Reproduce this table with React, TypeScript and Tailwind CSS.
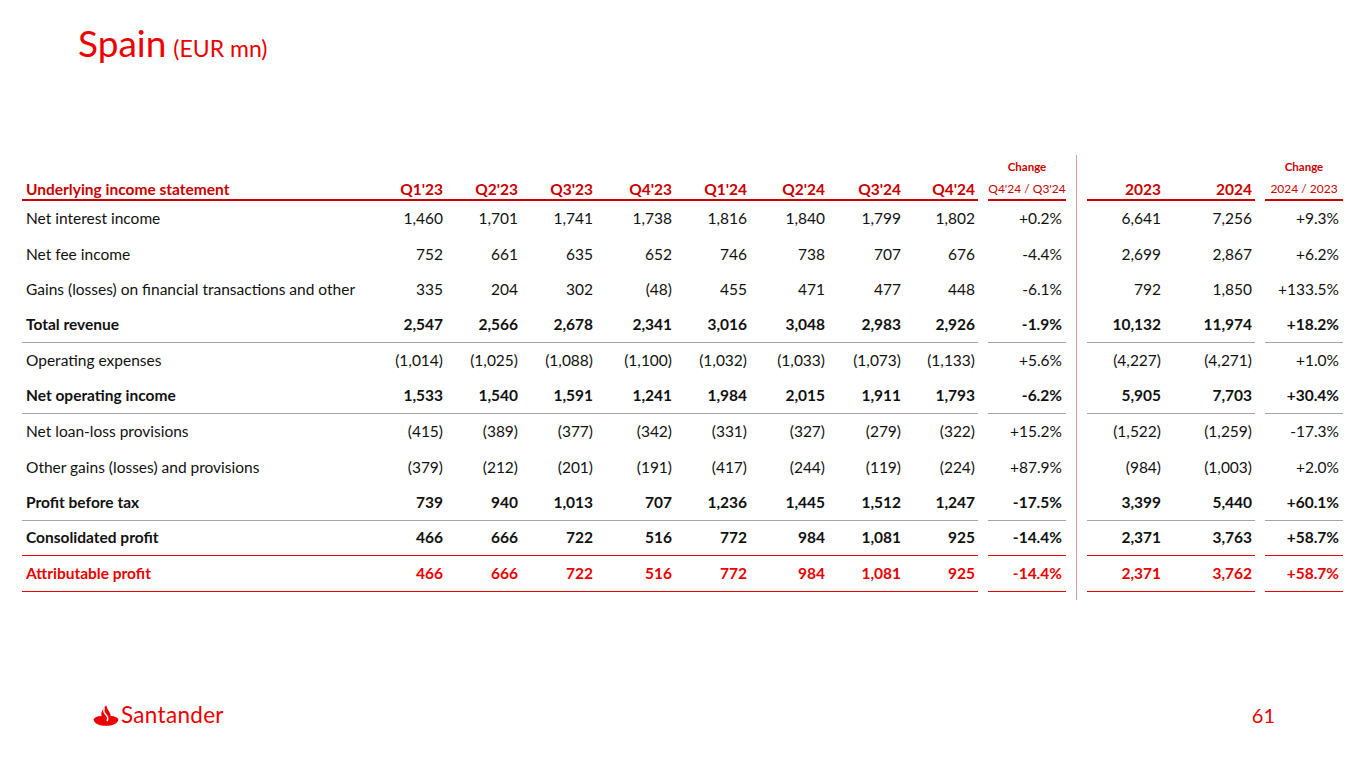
import React from 'react';

type Row = {
  label: string;
  q: string[];
  ch: string;
  y: string[];
  ych: string;
  bold?: boolean;
  red?: boolean;
  line?: 'gray' | 'red';
};

const rows: Row[] = [
  { label: 'Net interest income', q: ['1,460', '1,701', '1,741', '1,738', '1,816', '1,840', '1,799', '1,802'], ch: '+0.2%', y: ['6,641', '7,256'], ych: '+9.3%' },
  { label: 'Net fee income', q: ['752', '661', '635', '652', '746', '738', '707', '676'], ch: '-4.4%', y: ['2,699', '2,867'], ych: '+6.2%' },
  { label: 'Gains (losses) on financial transactions and other', q: ['335', '204', '302', '(48)', '455', '471', '477', '448'], ch: '-6.1%', y: ['792', '1,850'], ych: '+133.5%' },
  { label: 'Total revenue', q: ['2,547', '2,566', '2,678', '2,341', '3,016', '3,048', '2,983', '2,926'], ch: '-1.9%', y: ['10,132', '11,974'], ych: '+18.2%', bold: true, line: 'gray' },
  { label: 'Operating expenses', q: ['(1,014)', '(1,025)', '(1,088)', '(1,100)', '(1,032)', '(1,033)', '(1,073)', '(1,133)'], ch: '+5.6%', y: ['(4,227)', '(4,271)'], ych: '+1.0%' },
  { label: 'Net operating income', q: ['1,533', '1,540', '1,591', '1,241', '1,984', '2,015', '1,911', '1,793'], ch: '-6.2%', y: ['5,905', '7,703'], ych: '+30.4%', bold: true, line: 'gray' },
  { label: 'Net loan-loss provisions', q: ['(415)', '(389)', '(377)', '(342)', '(331)', '(327)', '(279)', '(322)'], ch: '+15.2%', y: ['(1,522)', '(1,259)'], ych: '-17.3%' },
  { label: 'Other gains (losses) and provisions', q: ['(379)', '(212)', '(201)', '(191)', '(417)', '(244)', '(119)', '(224)'], ch: '+87.9%', y: ['(984)', '(1,003)'], ych: '+2.0%' },
  { label: 'Profit before tax', q: ['739', '940', '1,013', '707', '1,236', '1,445', '1,512', '1,247'], ch: '-17.5%', y: ['3,399', '5,440'], ych: '+60.1%', bold: true, line: 'gray' },
  { label: 'Consolidated profit', q: ['466', '666', '722', '516', '772', '984', '1,081', '925'], ch: '-14.4%', y: ['2,371', '3,763'], ych: '+58.7%', bold: true, line: 'red' },
  { label: 'Attributable profit', q: ['466', '666', '722', '516', '772', '984', '1,081', '925'], ch: '-14.4%', y: ['2,371', '3,762'], ych: '+58.7%', bold: true, red: true, line: 'red' },
];

const qHeads = ["Q1'23", "Q2'23", "Q3'23", "Q4'23", "Q1'24", "Q2'24", "Q3'24", "Q4'24"];
const qWidths = ['w-[76px]', 'w-[75px]', 'w-[75px]', 'w-[79px]', 'w-[75px]', 'w-[78px]', 'w-[76px]', 'w-[74px]'];

function lineClass(r: Row) {
  if (r.line === 'gray') return 'border-b border-[#a3a3a3]';
  if (r.line === 'red') return 'border-b border-[#ec0000]';
  return '';
}

function rowText(r: Row) {
  const c = r.red ? 'text-[#ec0000]' : 'text-[#111111]';
  return `${c} ${r.bold ? 'font-bold' : 'font-normal'}`;
}

function Flame() {
  return (
    <svg width="26" height="21" viewBox="0 0 26 21" className="block">
      <path
        d="M0.5 14.5 C2 11.5 7.5 10.2 11 11.8 L13 13.2 L15 11.8 C18.5 10.2 24 11.5 25.5 14.5 C24.5 18.8 19.5 20.8 13 20.8 C6.5 20.8 1.5 18.8 0.5 14.5 Z"
        fill="#ec0000"
      />
      <path
        d="M13.2 0.3 C10.5 3.5 7.8 6.5 8.4 10.3 C8.9 13.2 10.9 15.4 13 15.9 C15.6 15.4 17.8 13.2 17.6 10.2 C17.4 7.4 14.4 5 13.2 0.3 Z"
        fill="#ec0000"
      />
      <path
        d="M11.2 3.6 C9.6 6.4 11.6 8.4 13.6 10.6 C15 12.2 15 14 14.2 15.6"
        fill="none"
        stroke="#ffffff"
        strokeWidth="1.4"
        strokeLinecap="round"
      />
    </svg>
  );
}

function ChangeHead({ sub }: { sub: string }) {
  return (
    <div className="w-[78px] h-[46px] flex flex-col items-center justify-end pb-[2px] border-b-2 border-[#cc0000] text-[#cc0000] whitespace-nowrap">
      <div className="text-[11.5px] font-bold leading-[14px] mb-[7px]">Change</div>
      <div className="text-[12px] leading-[16px]">{sub}</div>
    </div>
  );
}

export default function App() {
  return (
    <div className="w-[1365px] h-[768px] bg-white flex flex-col overflow-hidden font-['Lato',sans-serif] text-[#111111]">
      {/* Title */}
      <div className="h-[61px] pt-[24px] pl-[78px] flex items-baseline leading-none text-[#ec0000] whitespace-nowrap">
        <span className="text-[37px] leading-none">Spain</span>
        <span className="text-[23px] leading-none ml-[7px]">(EUR mn)</span>
      </div>

      {/* Table */}
      <div className="mt-[94px] ml-[22px] flex items-start text-[15.5px]">
        {/* Left block */}
        <div className="flex flex-col">
          <div className="flex gap-[10px]">
            <div className="w-[956px] h-[46px] flex items-end pr-[3px] border-b-2 border-[#cc0000] text-[#cc0000] font-bold leading-[20px]">
              <div className="w-[345px] pl-[4px]">Underlying income statement</div>
              {qHeads.map((h, i) => (
                <div key={h} className={`${qWidths[i]} text-right`}>
                  {h}
                </div>
              ))}
            </div>
            <ChangeHead sub="Q4'24 / Q3'24" />
          </div>
          {rows.map((r) => (
            <div key={r.label} className={`flex gap-[10px] ${rowText(r)}`}>
              <div className={`w-[956px] h-[35.5px] flex items-center pr-[3px] ${lineClass(r)}`}>
                <div className="w-[345px] pl-[4px] whitespace-nowrap">{r.label}</div>
                {r.q.map((v, i) => (
                  <div key={i} className={`${qWidths[i]} text-right`}>
                    {v}
                  </div>
                ))}
              </div>
              <div className={`w-[78px] h-[35.5px] flex items-center justify-end pr-[4px] ${lineClass(r)}`}>{r.ch}</div>
            </div>
          ))}
        </div>

        {/* Divider */}
        <div className="w-[21px] flex justify-center">
          <div className="w-[1.5px] h-[445px] bg-[#e79a9f]" />
        </div>

        {/* Right block */}
        <div className="flex flex-col">
          <div className="flex gap-[10px]">
            <div className="w-[168px] h-[46px] flex items-end border-b-2 border-[#cc0000] text-[#cc0000] font-bold leading-[20px]">
              <div className="w-[76px] text-right pr-[2px]">2023</div>
              <div className="w-[92px] text-right pr-[3px]">2024</div>
            </div>
            <ChangeHead sub="2024 / 2023" />
          </div>
          {rows.map((r) => (
            <div key={r.label} className={`flex gap-[10px] ${rowText(r)}`}>
              <div className={`w-[168px] h-[35.5px] flex items-center ${lineClass(r)}`}>
                <div className="w-[76px] text-right pr-[2px]">{r.y[0]}</div>
                <div className="w-[92px] text-right pr-[3px]">{r.y[1]}</div>
              </div>
              <div className={`w-[78px] h-[35.5px] flex items-center justify-end pr-[4px] ${lineClass(r)}`}>{r.ych}</div>
            </div>
          ))}
        </div>
      </div>

      {/* Footer */}
      <div className="mt-auto pb-[41px] pl-[93px] pr-[90px] flex items-center justify-between">
        <div className="flex items-end gap-[2px]">
          <Flame />
          <span className="text-[#ec0000] text-[22.5px] leading-[22px] tracking-[0.3px]">Santander</span>
        </div>
        <div className="text-[#ec0000] text-[20px] leading-[24px]">61</div>
      </div>
    </div>
  );
}
